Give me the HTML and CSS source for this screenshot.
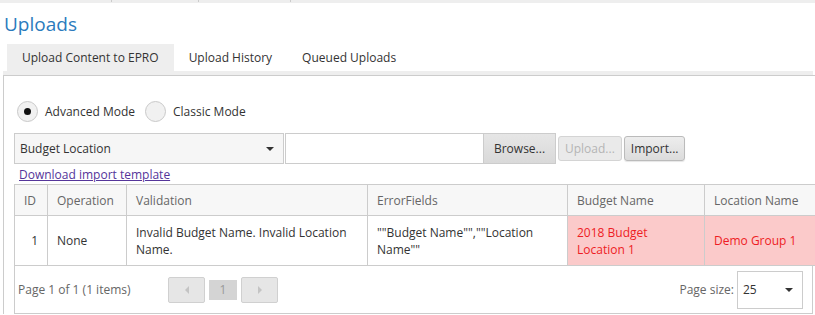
FILE: index.html
```html
<!DOCTYPE html>
<html>
    <head>
        <link rel="stylesheet" href="styles.css">
    </head>
    <body>
    <div class="topbar">
        <span class="topbar-cell" style="width: 111px;"></span>
        <span class="topbar-cell" style="width: 86px;"></span>
        <span class="topbar-cell" style="width: 91px;"></span>
    </div>
    <h1 class="page-title">Uploads</h1>
    <div class="tabs">
        <a class="tab tab-active" href="#">Upload Content to EPRO</a>
        <a class="tab" href="#">Upload History</a>
        <a class="tab" href="#">Queued Uploads</a>
    </div>
    <div class="panel">
        <div class="modes">
            <label class="mode"><span class="radio radio-on"></span>Advanced Mode</label>
            <label class="mode"><span class="radio"></span>Classic Mode</label>
        </div>
        <div class="toolbar">
            <div class="select select-type">
                <span>Budget Location</span>
                <span class="caret"></span>
            </div>
            <div class="file-box"></div>
            <button class="browse-btn">Browse...</button>
            <button class="btn" disabled>Upload...</button>
            <button class="btn">Import...</button>
        </div>
        <a class="template-link" href="#">Download import template</a>
        <div class="grid">
            <table class="grid-table">
                <colgroup>
                    <col style="width: 33px;">
                    <col style="width: 79px;">
                    <col style="width: 241px;">
                    <col style="width: 200px;">
                    <col style="width: 137px;">
                    <col style="width: 120px;">
                </colgroup>
                <thead>
                    <tr>
                        <th>ID</th>
                        <th>Operation</th>
                        <th>Validation</th>
                        <th>ErrorFields</th>
                        <th>Budget Name</th>
                        <th>Location Name</th>
                    </tr>
                </thead>
                <tbody>
                    <tr>
                        <td class="num">1</td>
                        <td>None</td>
                        <td>Invalid Budget Name. Invalid Location Name.</td>
                        <td>""Budget Name"",""Location Name""</td>
                        <td class="invalid">2018 Budget Location 1</td>
                        <td class="invalid">Demo Group 1</td>
                    </tr>
                </tbody>
            </table>
            <div class="pager">
                <span class="pager-info">Page 1 of 1 (1 items)</span>
                <div class="pager-nav">
                    <button class="pager-btn" disabled><span class="arrow-left"></span></button>
                    <span class="pager-page">1</span>
                    <button class="pager-btn" disabled><span class="arrow-right"></span></button>
                </div>
                <div class="pager-size">
                    <span>Page size:</span>
                    <div class="select select-size">
                        <span>25</span>
                        <span class="caret"></span>
                    </div>
                </div>
            </div>
        </div>
    </div>
    </body>
</html>
```

FILE: styles.css
```css
body {
    margin: 0;
    width: 815px;
    height: 315px;
    overflow: hidden;
    font-family: "Open Sans", "Noto Sans", sans-serif;
    font-size: 12px;
    color: #333;
    background: #fff;
}
.topbar {
    display: flex;
    height: 3px;
    background: #eee;
}
.topbar-cell {
    border-right: 1px solid #ccc;
    height: 2px;
}
.page-title {
    margin: 8px 0 0 4px;
    font-size: 19px;
    font-weight: normal;
    color: #2b7bbd;
    line-height: 26px;
}
.tabs {
    display: flex;
    margin: 7px 2px 0 3px;
    padding-left: 4px;
    border-bottom: 4px solid #eee;
}
.tab {
    display: block;
    padding: 0 15px;
    height: 27px;
    line-height: 27px;
    color: #333;
    text-decoration: none;
}
.tab-active {
    background: #eee;
}
.panel {
    margin-left: 3px;
    border-left: 1px solid #ccc;
    border-top: 1px solid #ccc;
    padding: 25px 0 0 10px;
    height: 213px;
}
.modes {
    display: flex;
    align-items: center;
    gap: 10px;
    padding-left: 3px;
}
.mode {
    display: flex;
    align-items: center;
    gap: 7px;
}
.radio {
    display: flex;
    align-items: center;
    justify-content: center;
    width: 19px;
    height: 19px;
    border: 1px solid #c9c9c9;
    border-radius: 50%;
    background: #f1f1f1;
}
.radio-on::after {
    content: "";
    width: 7px;
    height: 7px;
    border-radius: 50%;
    background: #111;
}
.toolbar {
    display: flex;
    align-items: center;
    margin-top: 11px;
}
.select {
    display: flex;
    align-items: center;
    justify-content: space-between;
    box-sizing: border-box;
    border: 1px solid #ccc;
    padding: 0 6px 0 5px;
}
.select-type {
    width: 270px;
    height: 31px;
    background: #f6f6f6;
}
.caret {
    width: 0;
    height: 0;
    border-left: 4px solid transparent;
    border-right: 4px solid transparent;
    border-top: 4px solid #333;
    margin-right: 3px;
}
.file-box {
    box-sizing: border-box;
    width: 198px;
    height: 31px;
    margin-left: 1px;
    border: 1px solid #ccc;
    border-right: none;
    background: #fff;
}
.browse-btn {
    box-sizing: border-box;
    width: 73px;
    height: 31px;
    border: 1px solid #ccc;
    background: linear-gradient(#e6e6e6, #d9d9d9);
    font: inherit;
    color: #333;
    padding: 0;
}
.btn {
    box-sizing: border-box;
    height: 25px;
    margin-left: 2px;
    padding: 0 6px;
    border: 1px solid #bbb;
    border-radius: 3px;
    background: linear-gradient(#ededed, #dcdcdc);
    font: inherit;
    color: #333;
    box-shadow: 0 1px 1px rgba(0, 0, 0, 0.1);
}
.btn:disabled {
    color: #b5b5b5;
    border-color: #d4d4d4;
    background: #eaeaea;
    box-shadow: none;
}
.template-link {
    display: inline-block;
    margin: 3px 0 0 5px;
    color: #55359a;
    line-height: 15px;
}
.grid {
    margin-top: 1px;
}
.grid-table {
    border-collapse: collapse;
    table-layout: fixed;
    width: 810px;
}
.grid-table th,
.grid-table td {
    border: 1px solid #ccc;
    text-align: left;
    padding: 0 9px;
    font-weight: normal;
    line-height: 17px;
}
.grid-table th {
    height: 30px;
    background: #f7f7f7;
    color: #666;
}
.grid-table td {
    height: 49px;
    color: #333;
}
.grid-table td.num {
    text-align: right;
}
.grid-table td.invalid {
    background: #fbcaca;
    color: #ee1c24;
}
.pager {
    display: flex;
    align-items: center;
    box-sizing: border-box;
    width: 799px;
    height: 48px;
    border: 1px solid #ccc;
    border-top: none;
    padding: 0 9px 0 3px;
    color: #666;
}
.pager-info {
    width: 150px;
}
.pager-nav {
    display: flex;
    align-items: center;
    gap: 4px;
}
.pager-btn {
    display: flex;
    align-items: center;
    justify-content: center;
    width: 37px;
    height: 26px;
    border: 1px solid #d0d0d0;
    border-radius: 2px;
    background: #e6e6e6;
    padding: 0;
}
.arrow-left,
.arrow-right {
    width: 0;
    height: 0;
    border-top: 4px solid transparent;
    border-bottom: 4px solid transparent;
}
.arrow-left {
    border-right: 4px solid #c4c4c4;
}
.arrow-right {
    border-left: 4px solid #c4c4c4;
}
.pager-page {
    width: 28px;
    height: 20px;
    line-height: 20px;
    text-align: center;
    background: #d4d4d4;
    color: #999;
}
.pager-size {
    display: flex;
    align-items: center;
    gap: 3px;
    margin-left: auto;
}
.select-size {
    width: 66px;
    height: 38px;
    color: #333;
    background: #fff;
}
```
